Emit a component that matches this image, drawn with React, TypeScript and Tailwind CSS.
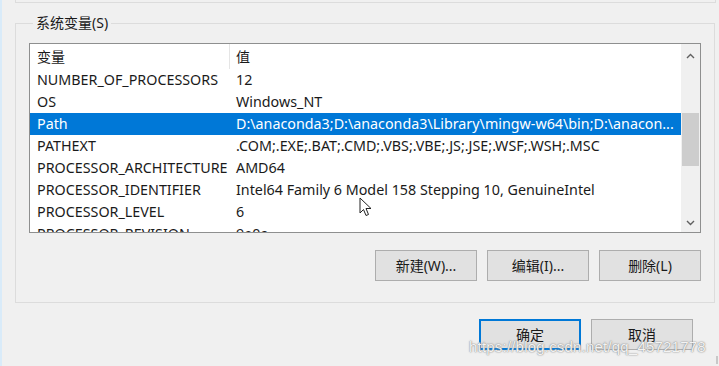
import React from "react";

type EnvRow = {
  name: string;
  value: string;
  selected?: boolean;
};

const rows: EnvRow[] = [
  { name: "NUMBER_OF_PROCESSORS", value: "12" },
  { name: "OS", value: "Windows_NT" },
  {
    name: "Path",
    value: "D:\\anaconda3;D:\\anaconda3\\Library\\mingw-w64\\bin;D:\\anacon...",
    selected: true,
  },
  { name: "PATHEXT", value: ".COM;.EXE;.BAT;.CMD;.VBS;.VBE;.JS;.JSE;.WSF;.WSH;.MSC" },
  { name: "PROCESSOR_ARCHITECTURE", value: "AMD64" },
  { name: "PROCESSOR_IDENTIFIER", value: "Intel64 Family 6 Model 158 Stepping 10, GenuineIntel" },
  { name: "PROCESSOR_LEVEL", value: "6" },
  { name: "PROCESSOR_REVISION", value: "9e0a" },
];

const font = "font-['Noto_Sans','Noto_Sans_CJK_SC',sans-serif]";

function WinButton({ label, primary = false }: { label: string; primary?: boolean }) {
  return (
    <button
      className={`h-[31px] w-[102px] bg-[#e1e1e1] text-[14px] text-[#1a1a1a] ${
        primary ? "border-2 border-[#0078d7]" : "border border-[#adadad]"
      }`}
    >
      {label}
    </button>
  );
}

function Chevron({ up }: { up?: boolean }) {
  return (
    <svg width="9" height="6" viewBox="0 0 9 6" className="block">
      <path
        d={up ? "M1 5 L4.5 1.5 L8 5" : "M1 1 L4.5 4.5 L8 1"}
        fill="none"
        stroke="#606060"
        strokeWidth="1.4"
      />
    </svg>
  );
}

export default function App() {
  return (
    <div
      className={`relative h-[366px] w-[719px] overflow-hidden border-l-2 border-[#d9ebf9] bg-[#f0f0f0] ${font}`}
    >
      {/* bottom of the group above */}
      <div className="ml-[13px] h-[3px] w-[701px] border-x border-b border-[#dcdcdc]" />

      <fieldset className="ml-[13px] mt-[12px] h-[288px] w-[700px] border border-[#dcdcdc] px-[13px]">
        <legend className="ml-[4px] px-[3px] text-[14px] leading-[16px] text-[#1a1a1a]">
          系统变量(S)
        </legend>

        {/* list view */}
        <div className="mt-[12px] flex h-[190px] w-[672px] overflow-hidden border border-[#8e8f8f] bg-white">
          <div className="flex-1 overflow-hidden text-[14.3px] text-[#1a1a1a]">
            <div className="flex h-[25px] items-center text-[14px]">
              <div className="w-[200px] border-r border-[#e5e5e5] pl-[7px] leading-[25px]">变量</div>
              <div className="pl-[6px]">值</div>
            </div>
            {rows.map((r) => (
              <div
                key={r.name}
                className={`flex h-[22px] items-center whitespace-nowrap ${
                  r.selected ? "bg-[#0078d7] text-white" : ""
                }`}
              >
                <div className="w-[200px] shrink-0 pl-[7px]">{r.name}</div>
                <div className="pl-[6px]">{r.value}</div>
              </div>
            ))}
          </div>

          {/* scrollbar */}
          <div className="flex w-[19px] flex-col items-center bg-[#f0f0f0]">
            <div className="flex h-[22px] items-center justify-center pt-[2px]">
              <Chevron up />
            </div>
            <div className="w-full flex-1 px-[1px] pt-[47px]">
              <div className="h-[53px] w-full bg-[#cdcdcd]" />
            </div>
            <div className="flex h-[22px] items-center justify-center pt-[4px]">
              <Chevron />
            </div>
          </div>
        </div>

        <div className="mt-[17px] flex justify-end gap-[10px]">
          <WinButton label="新建(W)..." />
          <WinButton label="编辑(I)..." />
          <WinButton label="删除(L)" />
        </div>
      </fieldset>

      <div className="mr-[26px] mt-[16px] flex justify-end gap-[10px]">
        <WinButton label="确定" primary />
        <WinButton label="取消" />
      </div>

      {/* mouse pointer */}
      <svg
        width="14"
        height="21"
        viewBox="0 0 14 21"
        className="absolute left-[357px] top-[197px]"
      >
        <path
          d="M1 1 L1 16 L4.5 12.5 L7 18.5 L9.5 17.5 L7 11.5 L12 11.5 Z"
          fill="white"
          stroke="#222"
          strokeWidth="1"
          strokeLinejoin="round"
        />
      </svg>

      {/* watermark */}
      <div className="absolute left-[467px] top-[336px] font-['Liberation_Sans',sans-serif] text-[15px] tracking-[0.2px] text-white/90 [text-shadow:0_0_1px_#777,0_0_2px_#999]">
        https://blog.csdn.net/qq_45721778
      </div>

      {/* resize grip */}
      <div className="absolute bottom-[2px] right-[1px] h-[8px] w-[2px] bg-[#c8c8c8]" />
    </div>
  );
}
